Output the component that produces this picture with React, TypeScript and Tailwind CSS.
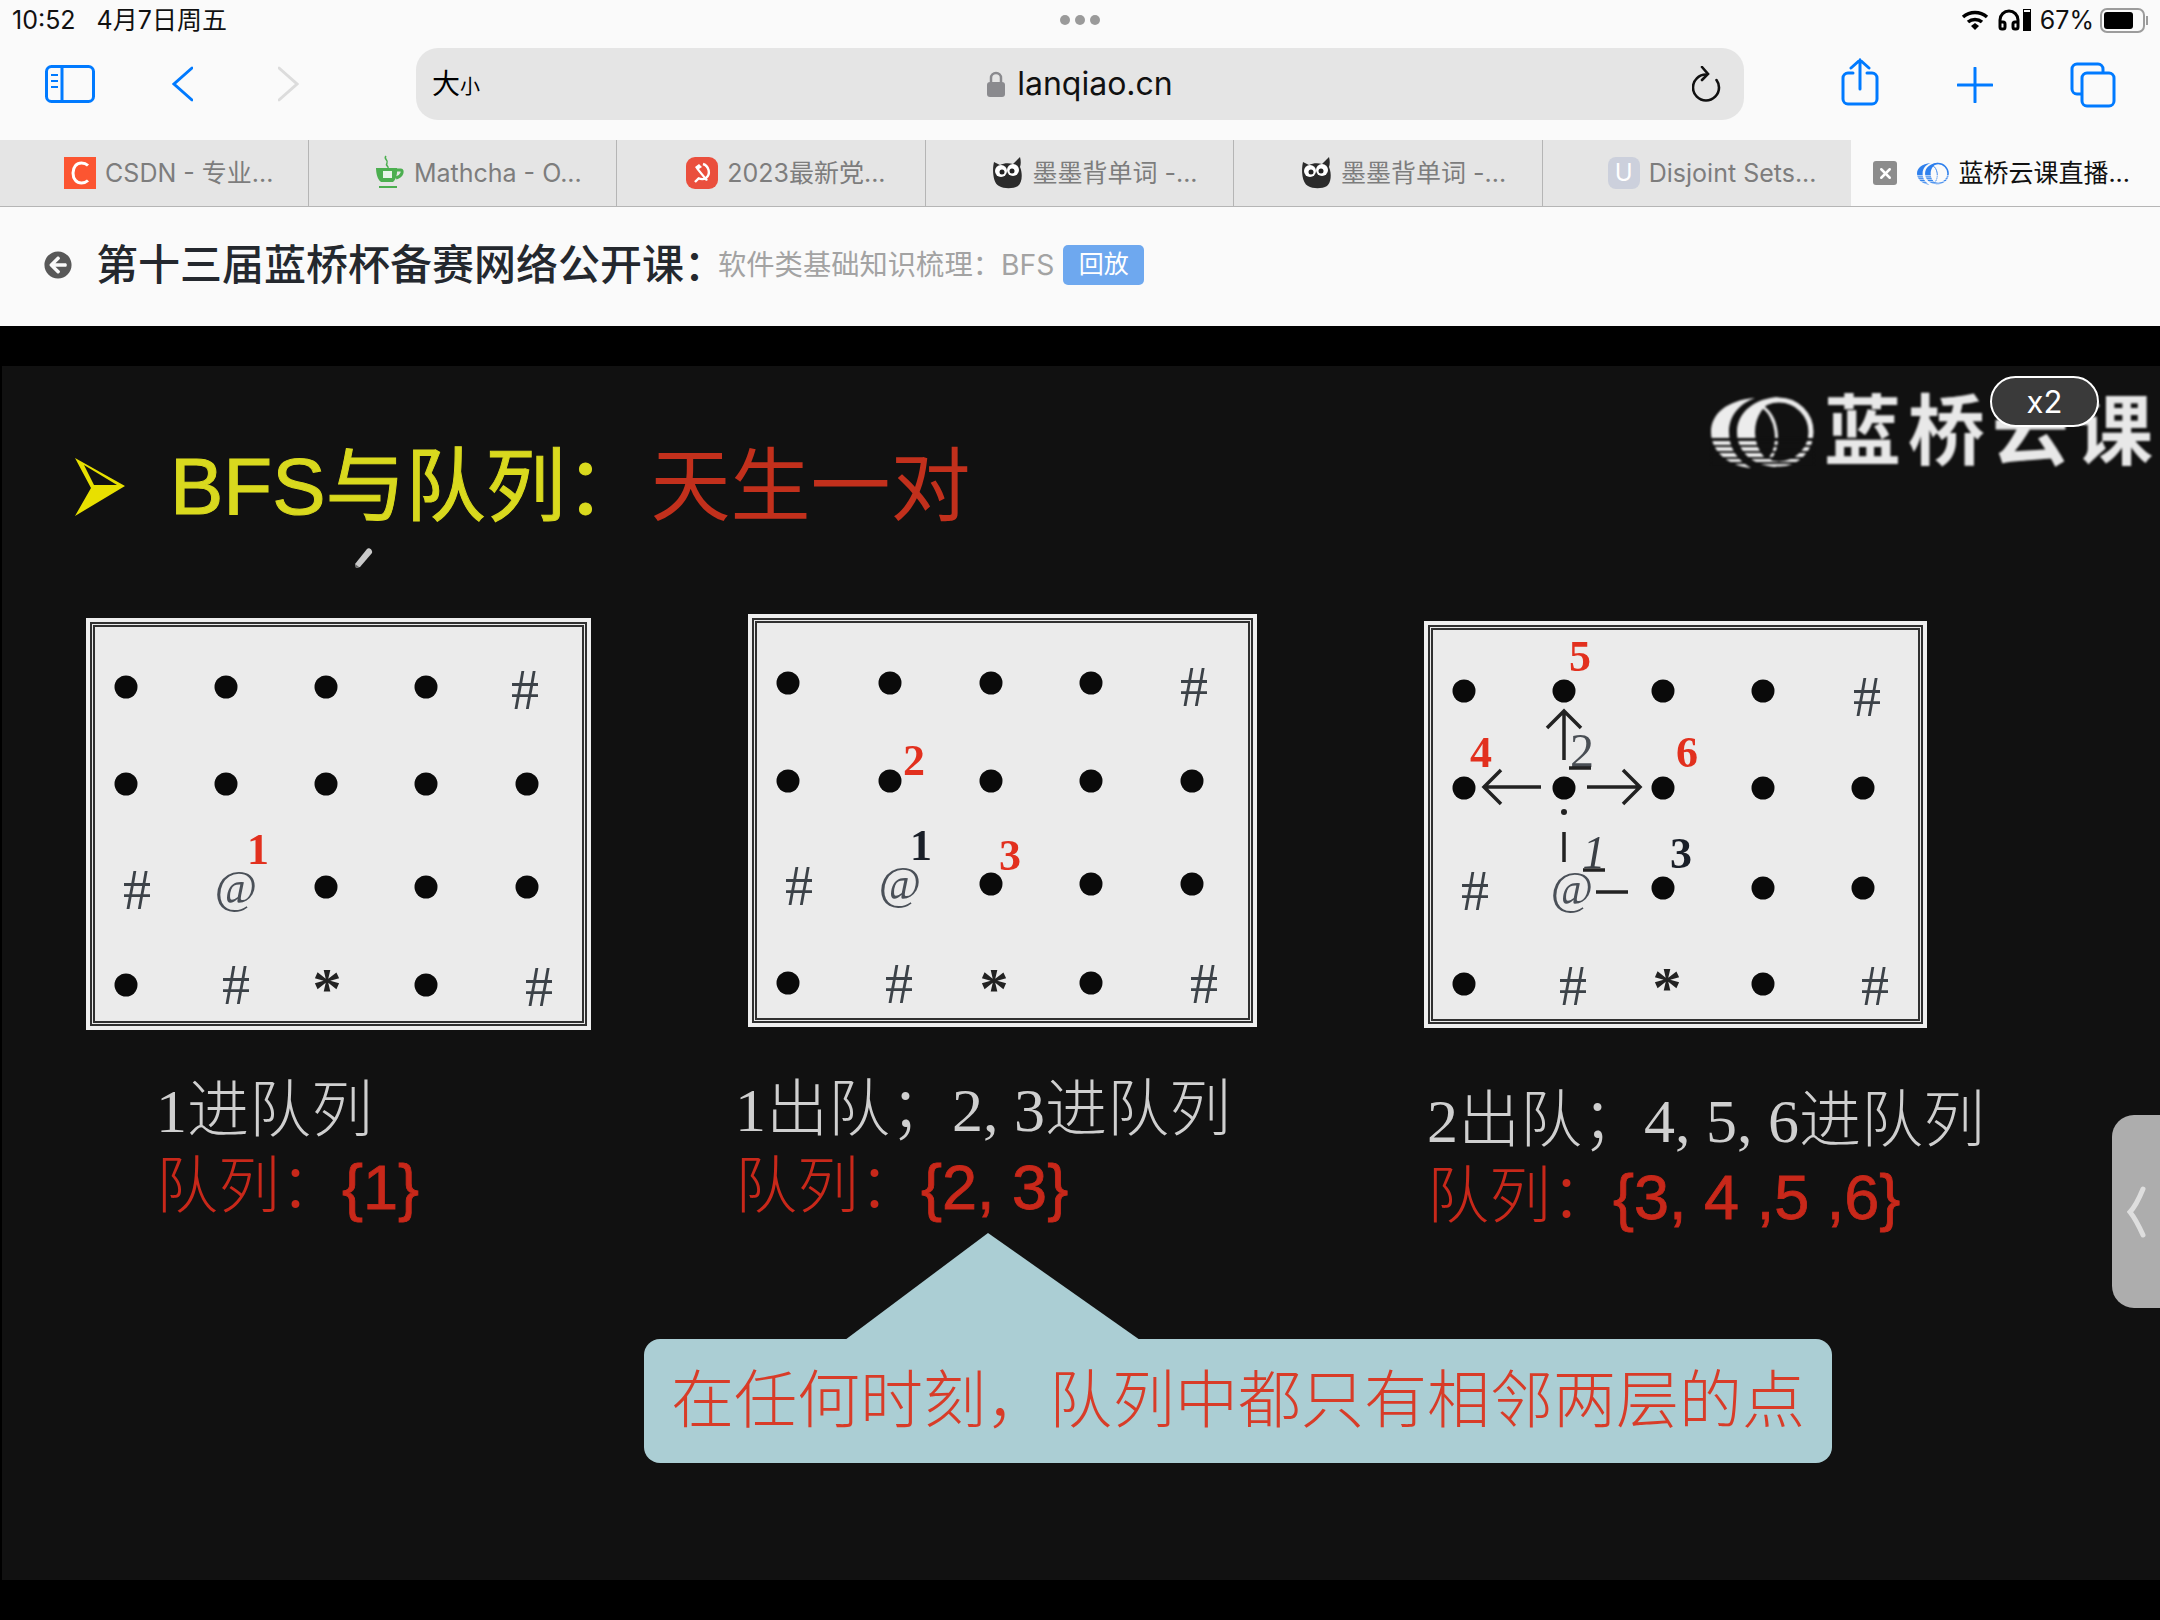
import { Headphones, X } from "lucide-react";
import { FaArrowCircleLeft } from "react-icons/fa";

const UI = "font-['Inter','Noto_Sans_CJK_SC',sans-serif]";

const tabs = [
  { title: "CSDN - 专业...", icon: "csdn" },
  { title: "Mathcha - O...", icon: "cup" },
  { title: "2023最新党...", icon: "party" },
  { title: "墨墨背单词 -...", icon: "owl" },
  { title: "墨墨背单词 -...", icon: "owl" },
  { title: "Disjoint Sets...", icon: "u" },
];

const LanqiaoLogo = ({ className, stripe, color }: { className: string; stripe: string; color: string }) => (
  <svg viewBox="0 0 103 72" className={className}>
    <path d="M44 2C16 4 0 18 0 36c0 20 18 34 40 36C26 64 18 52 18 36 18 20 28 8 44 2Z" fill={color} />
    <path d="M68 1C44 2 26 16 26 36c0 20 16 34 40 35-14-7-22-20-22-35C44 21 52 8 68 1Z" fill={color} />
    <circle cx="68" cy="36" r="32" fill="none" stroke={color} strokeWidth="5" />
    <path d="M50 10c16 8 22 40 6 56" fill="none" stroke={color} strokeWidth="3" />
    <rect x="0" y="42" width="103" height="3" fill={stripe} />
    <rect x="0" y="49" width="103" height="2" fill={stripe} />
    <rect x="0" y="55" width="103" height="2" fill={stripe} />
    <rect x="0" y="61" width="103" height="2" fill={stripe} />
    <rect x="0" y="66" width="103" height="2" fill={stripe} />
  </svg>
);

const TabIcon = ({ kind }: { kind: string }) => {
  if (kind === "csdn")
    return (
      <svg viewBox="0 0 32 32" className="w-8 h-8 shrink-0">
        <rect width="32" height="32" fill="#fc5531" />
        <path d="M24 8.500C22 6.600 19.800 6 17.500 6 12.500 6 9 10 9 16s3.500 10 8.500 10c2.300 0 4.500-.6 6.500-2.500" fill="none" stroke="#fff" strokeWidth="3" />
      </svg>
    );
  if (kind === "cup")
    return (
      <svg viewBox="0 0 32 36" className="w-8 h-9 shrink-0">
        <path d="M13 1c-3 3 3 4 1 7s2 3 1 5" fill="none" stroke="#4caf50" strokeWidth="1.500" />
        <path d="M3 13h21c0 0 1 10-4 14H8C3 24 3 13 3 13Z" fill="#4caf50" />
        <path d="M24 15h4c2 0 2 6-5 8" fill="none" stroke="#4caf50" strokeWidth="3" />
        <path d="M10 16h9v7h-9z" fill="#e8f5e9" />
        <rect x="6" y="31" width="18" height="2" fill="#4caf50" />
      </svg>
    );
  if (kind === "party")
    return (
      <svg viewBox="0 0 32 32" className="w-8 h-8 shrink-0">
        <rect width="32" height="32" rx="9" fill="#ea4f3d" />
        <path d="M17 7c6 2 8 10 3 14-3 2-6 1-8 0" fill="none" stroke="#fff" strokeWidth="2.400" />
        <path d="M9 10l4-3 3 3-3 2 9 11-2 1-9-11z" fill="#fff" />
        <path d="M9 25l4-4" stroke="#fff" strokeWidth="2.400" />
      </svg>
    );
  if (kind === "owl")
    return (
      <svg viewBox="0 0 32 34" className="w-8 h-[34px] shrink-0">
        <path d="M3 6l6 3c4-2 9-2 13-1l7-7c1 4 1 7 0 10 3 7 2 16-2 19-5 3-14 3-19 0C2 27 1 14 3 6Z" fill="#2b2b2b" />
        <circle cx="10" cy="15" r="6" fill="#fff" />
        <circle cx="22" cy="14" r="6" fill="#fff" />
        <circle cx="11" cy="16" r="2.500" fill="#222" />
        <circle cx="21" cy="15" r="2.500" fill="#222" />
      </svg>
    );
  return (
    <span className="w-8 h-8 shrink-0 rounded-lg bg-[#ccd0dc] text-white text-[24px] flex items-center justify-center">U</span>
  );
};

const StatusBar = () => (
  <div className="h-10 grid grid-cols-3 items-center text-[25px] leading-none text-[#111] pl-3 pr-[12px]">
    <div className="flex gap-[21px]">
      <span>10:52</span>
      <span>4月7日周五</span>
    </div>
    <div className="flex justify-center gap-[5px]">
      <span className="w-[10px] h-[10px] rounded-full bg-[#9a9a9a]" />
      <span className="w-[10px] h-[10px] rounded-full bg-[#9a9a9a]" />
      <span className="w-[10px] h-[10px] rounded-full bg-[#9a9a9a]" />
    </div>
    <div className="flex items-center justify-end">
      <svg viewBox="0 0 28 22" className="w-7 h-[22px]">
        <path d="M2 8c7-6 17-6 24 0" fill="none" stroke="#000" strokeWidth="3.500" />
        <path d="M7 13c4-3.500 10-3.500 14 0" fill="none" stroke="#000" strokeWidth="3.500" />
        <path d="M10 17l4-3 4 3-4 4z" fill="#000" />
      </svg>
      <Headphones className="w-[24px] h-[26px] ml-[8px] text-black" strokeWidth={3} />
      <span className="w-2 h-[22px] ml-[2px] border border-black flex items-end">
        <span className="w-full h-[18px] bg-black" />
      </span>
      <span className="ml-[9px]">67%</span>
      <span className="ml-[6px] w-[45px] h-[25px] border-2 border-[#9c9c9c] rounded-[7px] p-[2px]">
        <span className="block w-[29px] h-full bg-black rounded-[3px]" />
      </span>
      <span className="ml-[1px] w-[2px] h-[9px] bg-[#9c9c9c]" />
    </div>
  </div>
);

const Toolbar = () => (
  <div className="h-[100px] flex items-start">
    <svg viewBox="0 0 50 38" className="w-[50px] h-[38px] ml-[45px] mt-[25px] shrink-0" fill="none" stroke="#007aff" strokeWidth="3">
      <rect x="1.500" y="1.500" width="47" height="35" rx="5" />
      <path d="M17 1.500v35" />
      <path d="M6 10h7M6 16h7M6 22h7" strokeWidth="2" />
    </svg>
    <svg viewBox="0 0 21 36" className="w-[21px] h-9 ml-[77px] mt-[26px] shrink-0" fill="none" stroke="#007aff" strokeWidth="3" strokeLinecap="round">
      <path d="M20 2L2 18l18 16" />
    </svg>
    <svg viewBox="0 0 21 36" className="w-[21px] h-9 ml-[85px] mt-[26px] shrink-0" fill="none" stroke="#dcdcdc" strokeWidth="3" strokeLinecap="round">
      <path d="M1 2l18 16L1 34" />
    </svg>
    <div className="ml-[117px] mt-2 w-[1328px] h-[72px] rounded-[22px] bg-[#e5e5e5] grid grid-cols-[1fr_auto_1fr] items-center px-4 shrink-0">
      <div className="text-black leading-none">
        <span className="text-[28px]">大</span>
        <span className="text-[20px]">小</span>
      </div>
      <div className="flex items-center gap-[12px]">
        <svg viewBox="0 0 18 26" className="w-[18px] h-[26px]">
          <path d="M4 11V7a5 5 0 0 1 10 0v4" fill="none" stroke="#8a8a8e" strokeWidth="2.500" />
          <rect x="0" y="11" width="18" height="15" rx="3" fill="#8a8a8e" />
        </svg>
        <span className="text-[32px] leading-none text-[#111]">lanqiao.cn</span>
      </div>
      <div className="flex justify-end pr-[6px]">
        <svg viewBox="0 0 30 36" className="w-[30px] h-9" fill="none" stroke="#111" strokeWidth="2.600" strokeLinecap="round">
          <path d="M14 8.500A13 13 0 1 0 27 21.500c0-3-1-5.500-2.500-7.500" />
          <path d="M10 1l6 7-6 6" />
        </svg>
      </div>
    </div>
    <svg viewBox="0 0 38 48" className="w-[38px] h-12 ml-[97px] mt-[18px] shrink-0" fill="none" stroke="#007aff" strokeWidth="3" strokeLinecap="round">
      <path d="M12 15H7a5 5 0 0 0-5 5v21a5 5 0 0 0 5 5h24a5 5 0 0 0 5-5V20a5 5 0 0 0-5-5h-5" />
      <path d="M19 31V2M10 10l9-8 9 8" />
    </svg>
    <svg viewBox="0 0 36 36" className="w-9 h-9 ml-[78px] mt-[27px] shrink-0" fill="none" stroke="#007aff" strokeWidth="3" strokeLinecap="round">
      <path d="M18 1v34M1 18h34" />
    </svg>
    <svg viewBox="0 0 46 46" className="w-[46px] h-[46px] ml-[77px] mt-[22px] shrink-0" fill="none" stroke="#007aff" strokeWidth="3">
      <path d="M11 32H7a5 5 0 0 1-5-5V7a5 5 0 0 1 5-5h21a5 5 0 0 1 5 5v4" />
      <rect x="12" y="11" width="32" height="33" rx="5" />
    </svg>
  </div>
);

const TabBar = () => (
  <div className="h-[67px] grid grid-cols-7 border-b border-[#b5b5b5] text-[25px] leading-none">
    {tabs.map((tab, i) => (
      <div key={i} className={`bg-[#e5e5e5] flex items-center justify-center gap-[9px] pl-[30px] text-[#7d7d7d] ${i < 5 ? "border-r border-[#b5b5b5]" : ""}`}>
        <TabIcon kind={tab.icon} />
        <span className="whitespace-nowrap">{tab.title}</span>
      </div>
    ))}
    <div className="flex items-center pl-[22px] text-[#111]">
      <span className="w-6 h-6 rounded-[3px] bg-[#8c8c8c] flex items-center justify-center shrink-0">
        <X className="w-[17px] h-[17px] text-white" strokeWidth={3.5} />
      </span>
      <LanqiaoLogo className="w-[32px] h-[23px] ml-[20px] shrink-0" color="#2f80ed" stripe="#fafafa" />
      <span className="ml-[9px] whitespace-nowrap">蓝桥云课直播...</span>
    </div>
  </div>
);

const PageHeader = () => (
  <div className="h-[119px] flex items-center pl-11 pb-[3px]">
    <FaArrowCircleLeft className="w-7 h-7 text-[#585858]" />
    <h1 className="ml-6 text-[42px] leading-none font-medium text-[#24282e] whitespace-nowrap">第十三届蓝桥杯备赛网络公开课：</h1>
    <span className="-ml-[8px] text-[28.300px] leading-none text-[#a3a3a3] whitespace-nowrap">软件类基础知识梳理：BFS</span>
    <span className="ml-[9px] w-[81px] h-10 rounded-[5px] bg-[#6ea8ef] text-white text-[25px] flex items-center justify-center">回放</span>
  </div>
);

type Mark = { x: number; y: number; t: string; c: string };

const markClass: Record<string, string> = {
  hash: "fill-[#3c4248] text-[56px]",
  at: "fill-[#4a5058] text-[46px]",
  star: "fill-[#222] text-[58px] font-bold",
  red: "fill-[#e2301e] text-[44px] font-bold",
  num: "fill-[#1a1f28] text-[44px] font-bold",
  gray: "fill-[#4a4f55] text-[48px]",
  ital: "fill-[#3a3f45] text-[46px] italic",
};

const Board = ({ w, h, xs, ys, dots, marks, children }: {
  w: number; h: number; xs: number[]; ys: number[]; dots: string[]; marks: Mark[]; children?: React.ReactNode;
}) => (
  <div className="border-4 border-[#efefef] bg-[#ebebeb] blur-[0.5px]">
    <div className="border-[5px] border-double border-[#303030]">
      <svg width={w - 18} height={h - 18} className="block overflow-visible font-['Liberation_Serif',serif]">
        {dots.map((row, r) =>
          row.split("").map((ch, c) =>
            ch === "o" ? <circle key={`${r}-${c}`} cx={xs[c]} cy={ys[r]} r={11.500} fill="#0a0a0a" /> : null,
          ),
        )}
        {marks.map((m, i) => (
          <text key={i} x={m.x} y={m.y} textAnchor="middle" dominantBaseline="central" className={markClass[m.c]}>
            {m.t}
          </text>
        ))}
        {children}
      </svg>
    </div>
  </div>
);

const Caption = ({ top, left, gap, white, label, queue }: {
  top: string; left: string; gap: string; white: string; label: string; queue: string;
}) => (
  <div className={`${top} ${left} font-['Liberation_Serif','Noto_Sans_CJK_SC',serif] whitespace-nowrap font-light blur-[0.5px]`}>
    <div className="h-[60px] leading-[60px] text-[62px] text-[#cfcfcf]">{white}</div>
    <div className={`${gap} h-[60px] leading-[60px] text-[62px] text-[#c8281a] flex items-center`}>
      {label}
      <span className="font-['Liberation_Sans',sans-serif] text-[63px] font-normal [-webkit-text-stroke:0.8px_#c8281a]">{queue}</span>
    </div>
  </div>
);

const Slide = () => (
  <div className="relative ml-[2px] h-[1214px] bg-[#111111]">
    <div className="absolute right-0 top-[27px] flex items-center gap-[10px] blur-[0.8px]">
      <LanqiaoLogo className="w-[103px] h-[72px]" color="#ececec" stripe="#111111" />
      <span className="text-[77px] leading-none font-bold tracking-[7px] text-[#e8e8e8] whitespace-nowrap">蓝桥云课</span>
    </div>
    <div className="absolute left-[1988px] top-[10px] w-[109px] h-[51px] rounded-full bg-[#3a3a3a] border-2 border-white flex items-center justify-center text-white text-[31px] leading-none">
      x2
    </div>
    <div className="absolute right-0 top-[749px] w-[48px] h-[193px] rounded-l-[22px] bg-[#adadad] flex items-center pl-[15px]">
      <svg viewBox="0 0 20 52" className="w-5 h-[52px]" fill="none" stroke="#dedede" strokeWidth="5" strokeLinecap="round">
        <path d="M16 3C11 15 7 22 3 26c4 5 8 12 13 23" />
      </svg>
    </div>
    <svg viewBox="0 0 20 22" className="absolute left-[352px] top-[181px] w-5 h-[22px]">
      <path d="M2 21l-1-4L13 2c2-2 6 1 5 4L6 20z" fill="#c9c9c9" />
      <path d="M2 21l-1-4 4 3z" fill="#666" />
    </svg>

    <div className="h-[248px] pt-[76px] pl-[73px] flex items-start text-[80px] leading-[90px] blur-[0.5px] font-['Liberation_Sans','Noto_Sans_CJK_SC',sans-serif] whitespace-nowrap">
      <svg viewBox="0 0 50 58" className="w-[50px] h-[58px] mt-4">
        <path d="M0 0l50 28L0 58l16-28z" fill="#e8e000" />
        <path d="M9 7l33 20H19z" fill="#111111" />
      </svg>
      <span className="ml-[45px] text-[#d9d91e] [-webkit-text-stroke:1px_#d9d91e]">BFS与队列：</span>
      <span className="ml-[5px] text-[#c2301c]">天生一对</span>
    </div>

    <div className="h-[619px] flex items-start pl-[84px]">
      <div className="mt-[4px] w-[505px] shrink-0">
        <Board
          w={505}
          h={412}
          xs={[31, 131, 231, 331, 432]}
          ys={[60, 157, 260, 358]}
          dots={["oooo.", "ooooo", "..ooo", "o..o."]}
          marks={[
            { x: 430, y: 63, t: "#", c: "hash" },
            { x: 42, y: 263, t: "#", c: "hash" },
            { x: 141, y: 260, t: "@", c: "at" },
            { x: 163, y: 222, t: "1", c: "red" },
            { x: 141, y: 358, t: "#", c: "hash" },
            { x: 232, y: 361, t: "*", c: "star" },
            { x: 444, y: 360, t: "#", c: "hash" },
          ]}
        />
        <Caption top="mt-[51px]" left="ml-[70px]" gap="mt-[16px]" white="1进队列" label="队列：" queue="{1}" />
      </div>

      <div className="ml-[157px] w-[509px] shrink-0">
        <Board
          w={509}
          h={413}
          xs={[31, 133, 234, 334, 435]}
          ys={[60, 158, 261, 360]}
          dots={["oooo.", "ooooo", "..ooo", "o..o."]}
          marks={[
            { x: 437, y: 64, t: "#", c: "hash" },
            { x: 157, y: 137, t: "2", c: "red" },
            { x: 164, y: 222, t: "1", c: "num" },
            { x: 253, y: 232, t: "3", c: "red" },
            { x: 42, y: 263, t: "#", c: "hash" },
            { x: 143, y: 260, t: "@", c: "at" },
            { x: 142, y: 361, t: "#", c: "hash" },
            { x: 237, y: 365, t: "*", c: "star" },
            { x: 447, y: 361, t: "#", c: "hash" },
          ]}
        />
        <Caption top="mt-[53px]" left="-ml-[13px]" gap="mt-[17px]" white="1出队；2, 3进队列" label="队列：" queue="{2, 3}" />
      </div>

      <div className="mt-[7px] ml-[167px] w-[503px] shrink-0">
        <Board
          w={503}
          h={407}
          xs={[31, 131, 230, 330, 430]}
          ys={[61, 158, 258, 354]}
          dots={["oooo.", "ooooo", "..ooo", "o..o."]}
          marks={[
            { x: 434, y: 67, t: "#", c: "hash" },
            { x: 147, y: 26, t: "5", c: "red" },
            { x: 48, y: 122, t: "4", c: "red" },
            { x: 254, y: 122, t: "6", c: "red" },
            { x: 149, y: 120, t: "2", c: "gray" },
            { x: 161, y: 222, t: "1", c: "ital" },
            { x: 248, y: 223, t: "3", c: "num" },
            { x: 139, y: 258, t: "@", c: "at" },
            { x: 42, y: 261, t: "#", c: "hash" },
            { x: 140, y: 356, t: "#", c: "hash" },
            { x: 234, y: 357, t: "*", c: "star" },
            { x: 442, y: 356, t: "#", c: "hash" },
          ]}
        >
          <g fill="none" stroke="#222" strokeWidth="3.500">
            <path d="M131 130V82M114 98l17-17 17 17" />
            <path d="M154 157h52M190 140l17 17-17 17" />
            <path d="M108 157H50M68 140l-17 17 17 17" />
            <path d="M131 202v30M163 262h32" />
            <path d="M136 138h22M150 240h22" />
          </g>
          <circle cx={131} cy={182} r={3} fill="#222" />
        </Board>
        <Caption top="mt-[63px]" left="ml-[3px]" gap="mt-[16px]" white="2出队；4, 5, 6进队列" label="队列：" queue="{3, 4 ,5 ,6}" />
      </div>
    </div>

    <div className="ml-[642px] w-[1188px] blur-[0.5px]">
      <svg viewBox="0 0 295 107" className="block ml-[201px] w-[295px] h-[107px]">
        <path d="M143 0l152 107H0z" fill="#abced4" />
      </svg>
      <div className="-mt-px h-[124px] rounded-[16px] bg-[#abced4] flex items-center justify-center text-[63px] leading-none font-light text-[#d83c28] whitespace-nowrap font-['Liberation_Serif','Noto_Sans_CJK_SC',serif]">
        在任何时刻，队列中都只有相邻两层的点
      </div>
    </div>
  </div>
);

export default function App() {
  return (
    <div className={`w-[2160px] h-[1620px] overflow-hidden bg-[#fafafa] ${UI}`}>
      <StatusBar />
      <Toolbar />
      <TabBar />
      <PageHeader />
      <div className="h-[1294px] bg-black pt-10">
        <Slide />
      </div>
    </div>
  );
}
